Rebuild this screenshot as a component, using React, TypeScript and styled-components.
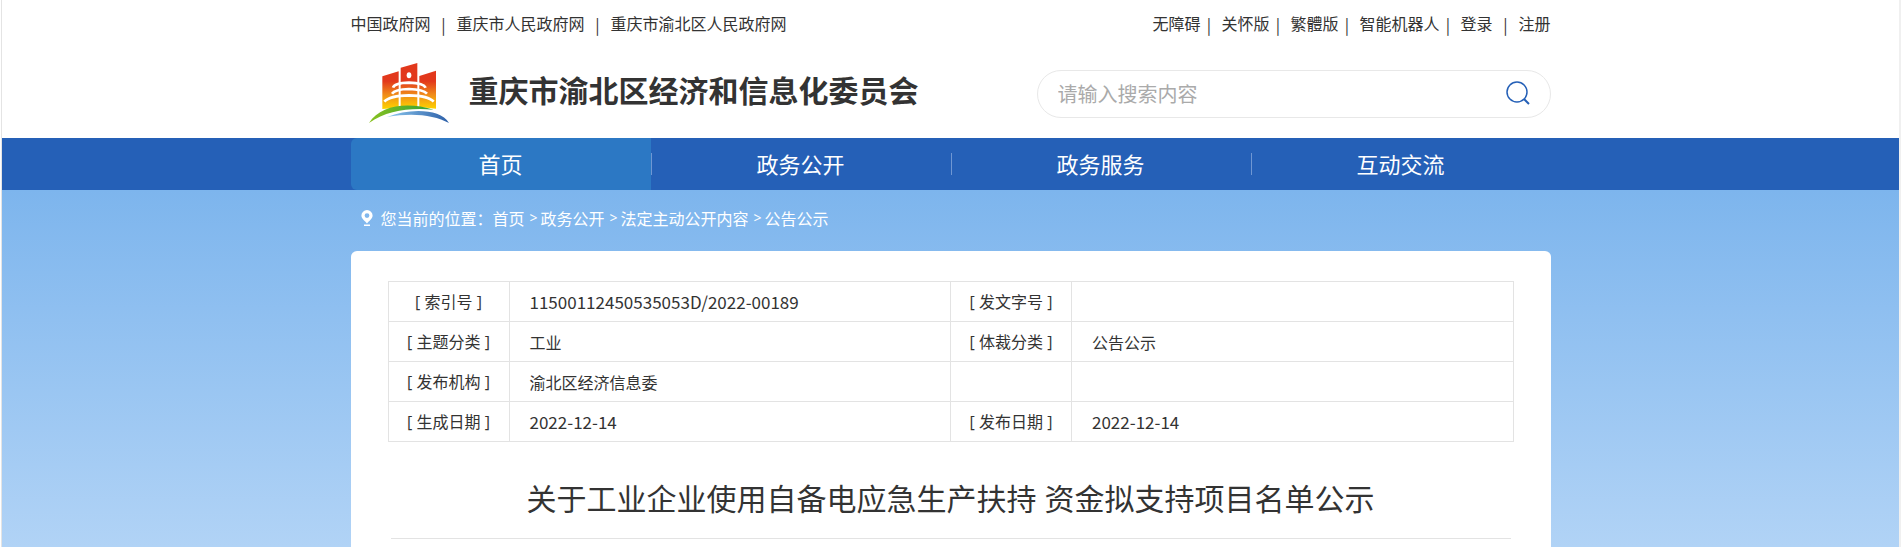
import React from 'react';
import styled, { createGlobalStyle } from 'styled-components';

const Global = createGlobalStyle`
  *, *::before, *::after { box-sizing: border-box; }
  html, body { margin: 0; background: #fff; }
  body, input, button {
    font-family: "Open Sans", "Noto Sans CJK SC", sans-serif;
    font-size: 16px;
    color: #333;
  }
  a { color: inherit; text-decoration: none; }
`;

const Page = styled.div`
  display: flex;
  flex-direction: column;
  min-height: 100vh;
  margin-left: 1px;
  border-left: 1px solid #e4e4e4;
  border-right: 2px solid #f0f0f0;
`;

const Container = styled.div`
  width: 100%;
  max-width: 1200px;
  margin: 0 auto;
`;

const TopBar = styled(Container)`
  display: flex;
  justify-content: space-between;
  height: 48px;
  line-height: 48px;
`;

const LinkRow = styled.nav`
  display: flex;
  white-space: nowrap;
`;

const Divider = styled.span<{ $tight?: boolean }>`
  width: ${(p) => (p.$tight ? 21 : 26)}px;
  padding-right: ${(p) => (p.$tight ? 4 : 0)}px;
  font-family: "Noto Sans CJK SC", sans-serif;
  text-align: center;
`;

const Header = styled(Container)`
  display: flex;
  align-items: center;
  justify-content: space-between;
  height: 90px;
`;

const Brand = styled.a`
  display: flex;
  align-items: center;
  gap: 20px;
  padding-left: 18px;
`;

const SiteName = styled.h1`
  margin: 0;
  padding-bottom: 4px;
  font-size: 30px;
  line-height: 40px;
  font-weight: 700;
  white-space: nowrap;
`;

const SearchForm = styled.form`
  display: flex;
  align-items: center;
  width: 514px;
  height: 48px;
  margin-top: 2px;
  padding: 0 20px;
  border: 1px solid #e8e8e8;
  border-radius: 24px;
`;

const SearchInput = styled.input`
  flex: 1;
  min-width: 0;
  height: 40px;
  padding: 0;
  border: 0;
  outline: 0;
  background: none;
  font-size: 20px;
  &::placeholder { color: #aaa; opacity: 1; }
`;

const SearchButton = styled.button`
  display: flex;
  padding: 0 0 2px;
  border: 0;
  background: none;
  cursor: pointer;
`;

const NavBar = styled.nav`
  background: #2560b7;
`;

const NavList = styled(Container)`
  display: flex;
`;

const NavItem = styled.a<{ $active?: boolean }>`
  position: relative;
  flex: 1;
  height: 52px;
  line-height: 52px;
  font-size: 22px;
  text-align: center;
  color: #fff;
  background: ${(p) => (p.$active ? '#2c78c4' : 'none')};
  border-radius: 6px 0 0 6px;
  &:not(:first-child)::before {
    content: '';
    position: absolute;
    left: 0;
    top: 15px;
    width: 1px;
    height: 22px;
    background: #6f97d3;
  }
`;

const Body = styled.main`
  flex: 1;
  display: flex;
  flex-direction: column;
  background: linear-gradient(#7db5ed, #b1d3f6);
`;

const Crumbs = styled(Container)`
  display: flex;
  align-items: center;
  height: 61px;
  padding: 0 0 6px 10px;
  color: #fff;
  white-space: nowrap;
`;

const CrumbLabel = styled.span`
  padding-left: 8px;
`;

const CrumbArrow = styled.span`
  width: 16px;
  padding-left: 2px;
  font-size: 14px;
  text-align: center;
`;

const Card = styled(Container)`
  flex: 1;
  padding: 30px 37px 0;
  background: #fff;
  border-radius: 6px 6px 0 0;
`;

const InfoTable = styled.table`
  width: 100%;
  border-collapse: collapse;
  table-layout: fixed;
`;

const LabelCell = styled.th`
  width: 121px;
  height: 40px;
  padding: 0;
  border: 1px solid #e3e3e3;
  font-weight: 400;
  line-height: 24px;
  text-align: center;
`;

const ValueCell = styled.td<{ $numeric?: boolean }>`
  height: 40px;
  padding: 0 20px;
  border: 1px solid #e3e3e3;
  font-family: "Noto Sans CJK SC", sans-serif;
  font-size: ${(p) => (p.$numeric ? 17 : 16)}px;
  line-height: 24px;
`;

const Title = styled.h2`
  margin: 36px 3px 0;
  padding-bottom: 18px;
  border-bottom: 1px solid #e3e3e3;
  font-size: 30px;
  line-height: 42px;
  font-weight: 400;
  text-align: center;
`;

const Logo = () => (
  <svg width="80" height="60" viewBox="0 0 240 180" aria-hidden="true">
    <defs>
      <linearGradient id="tower" gradientUnits="userSpaceOnUse" x1="0" y1="0" x2="0" y2="136">
        <stop offset="0.4" stopColor="#e2381c" />
        <stop offset="0.7" stopColor="#f08c1a" />
        <stop offset="1" stopColor="#fdd000" />
      </linearGradient>
      <linearGradient id="hill">
        <stop offset="0" stopColor="#8ac21f" />
        <stop offset="1" stopColor="#2fa03a" />
      </linearGradient>
      <linearGradient id="river">
        <stop offset="0" stopColor="#8cc8ee" />
        <stop offset="1" stopColor="#2c5fa8" />
      </linearGradient>
    </defs>
    <path fill="url(#tower)" d="M40 40 89 25V134L40 138ZM95 14 145 0V132L95 132ZM151 39 201 23V137L151 132Z" />
    <ellipse cx="120" cy="37" rx="7" ry="9" fill="#fff" />
    <g fill="none" stroke="#fff" strokeWidth="8">
      <path d="M72 74Q76 60 120 59Q164 60 170 74" />
      <path d="M69 92Q78 79 120 78Q162 79 174 92" />
      <path d="M46 116Q62 98 120 97Q178 98 194 116" />
    </g>
    <path fill="url(#hill)" d="M0 180C34 124 120 116 194 140C120 134 54 142 0 180Z" />
    <path fill="url(#river)" d="M54 162C120 136 214 136 240 180C196 156 130 148 54 162Z" />
  </svg>
);

const SearchIcon = () => (
  <svg width="24" height="24" viewBox="0 0 24 24" fill="none" stroke="#2560b7" strokeWidth="1.500" aria-hidden="true">
    <circle cx="11" cy="11" r="10" />
    <path d="M18 18 23 23" strokeWidth="2" />
  </svg>
);

const PinIcon = () => (
  <svg width="12" height="16" viewBox="0 0 12 16" aria-hidden="true">
    <path fill="#fff" fillRule="evenodd" d="M6 0a5.600 5.600 0 0 1 5.600 5.600C11.600 9 8 11 6 13.500 4 11 .4 9 .4 5.600A5.600 5.600 0 0 1 6 0Zm0 3.200a2.400 2.400 0 1 0 0 4.800 2.400 2.400 0 0 0 0-4.800Z" />
    <path fill="#fff" d="M3 14.500h6V16H3Z" />
  </svg>
);

const portals = ['中国政府网', '重庆市人民政府网', '重庆市渝北区人民政府网'];
const tools = ['无障碍', '关怀版', '繁體版', '智能机器人', '登录', '注册'];
const sections = ['首页', '政务公开', '政务服务', '互动交流'];
const crumbs = ['首页', '政务公开', '法定主动公开内容', '公告公示'];
const rows = [
  ['[ 索引号 ]', '11500112450535053D/2022-00189', '[ 发文字号 ]', ''],
  ['[ 主题分类 ]', '工业', '[ 体裁分类 ]', '公告公示'],
  ['[ 发布机构 ]', '渝北区经济信息委', '', ''],
  ['[ 生成日期 ]', '2022-12-14', '[ 发布日期 ]', '2022-12-14'],
];

const isNumeric = (text: string) => /^\d/.test(text);

export default function App() {
  return (
    <>
      <Global />
      <Page>
        <TopBar>
          <LinkRow>
            {portals.map((name, i) => (
              <React.Fragment key={name}>
                {i > 0 && <Divider>|</Divider>}
                <a href="#">{name}</a>
              </React.Fragment>
            ))}
          </LinkRow>
          <LinkRow>
            {tools.map((name, i) => (
              <React.Fragment key={name}>
                {i > 0 && <Divider $tight={i < tools.length - 1}>|</Divider>}
                <a href="#">{name}</a>
              </React.Fragment>
            ))}
          </LinkRow>
        </TopBar>
        <Header>
          <Brand href="#">
            <Logo />
            <SiteName>重庆市渝北区经济和信息化委员会</SiteName>
          </Brand>
          <SearchForm role="search" onSubmit={(e) => e.preventDefault()}>
            <SearchInput type="text" aria-label="搜索" placeholder="请输入搜索内容" />
            <SearchButton type="submit" aria-label="搜索">
              <SearchIcon />
            </SearchButton>
          </SearchForm>
        </Header>
        <NavBar>
          <NavList>
            {sections.map((name, i) => (
              <NavItem key={name} href="#" $active={i === 0}>{name}</NavItem>
            ))}
          </NavList>
        </NavBar>
        <Body>
          <Crumbs>
            <PinIcon />
            <CrumbLabel>您当前的位置：</CrumbLabel>
            {crumbs.map((name, i) => (
              <React.Fragment key={name}>
                {i > 0 && <CrumbArrow>&gt;</CrumbArrow>}
                <a href="#">{name}</a>
              </React.Fragment>
            ))}
          </Crumbs>
          <Card>
            <InfoTable>
              <tbody>
                {rows.map(([a, b, c, d]) => (
                  <tr key={a}>
                    <LabelCell scope="row">{a}</LabelCell>
                    <ValueCell $numeric={isNumeric(b)}>{b}</ValueCell>
                    <LabelCell scope="row">{c}</LabelCell>
                    <ValueCell $numeric={isNumeric(d)}>{d}</ValueCell>
                  </tr>
                ))}
              </tbody>
            </InfoTable>
            <Title>关于工业企业使用自备电应急生产扶持 资金拟支持项目名单公示</Title>
          </Card>
        </Body>
      </Page>
    </>
  );
}
